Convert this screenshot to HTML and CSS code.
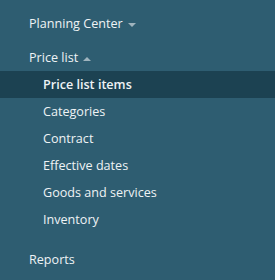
FILE: index.html
```html
<!DOCTYPE html>
<html lang="en">
<head>
    <meta charset="UTF-8">
    <title>Menu</title>
    <link rel="stylesheet" href="styles.css">
</head>
<body>
    <div class="sidebar">
        <div class="section">
            <div class="section-title">Planning Center <span class="caret down"></span></div>
        </div>
        <div class="section">
            <div class="section-title">Price list <span class="caret up"></span></div>
            <ul class="menu">
                <li class="menu-item active">Price list items</li>
                <li class="menu-item">Categories</li>
                <li class="menu-item">Contract</li>
                <li class="menu-item">Effective dates</li>
                <li class="menu-item">Goods and services</li>
                <li class="menu-item">Inventory</li>
            </ul>
        </div>
        <div class="section">
            <div class="section-title">Reports</div>
        </div>
    </div>
</body>
</html>
```

FILE: styles.css
```css
* {
    margin: 0;
    padding: 0;
    box-sizing: border-box;
}
html, body {
    height: 100%;
}
body {
    background-color: #2e5d71;
    font-family: "Open Sans", sans-serif;
    font-size: 12.6px;
    color: #eef3f5;
}
.sidebar {
    padding-top: 10px;
}
.section {
    margin-bottom: 7px;
}
.section:nth-child(2) {
    margin-bottom: 13px;
}
.section-title {
    line-height: 27px;
    padding-left: 29px;
}
.caret {
    display: inline-block;
    width: 0;
    height: 0;
    margin-left: 2px;
    vertical-align: middle;
    border-left: 4px solid transparent;
    border-right: 4px solid transparent;
}
.caret.down {
    border-top: 4px solid #9fb4be;
}
.caret.up {
    border-bottom: 4px solid #9fb4be;
}
.menu {
    list-style: none;
}
.menu-item {
    line-height: 27px;
    padding-left: 43px;
}
.menu-item.active {
    background-color: #1c4252;
    font-weight: 600;
}
```
